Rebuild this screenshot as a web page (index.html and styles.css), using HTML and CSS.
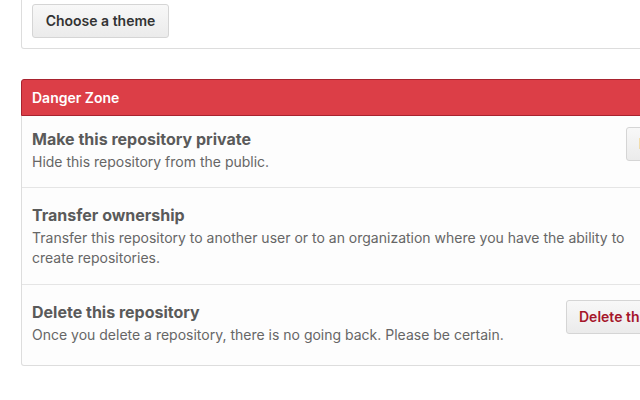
FILE: index.html
```html
<!DOCTYPE html>
<html>
<head>
<meta charset="utf-8">
<link rel="stylesheet" href="styles.css">
</head>
<body>
<div class="page">
  <div class="box-top">
    <button class="btn btn-theme">Choose a theme</button>
  </div>

  <div class="danger">
    <h3 class="danger-head">Danger Zone</h3>
    <div class="danger-body">
      <div class="row row-first">
        <div class="row-text">
          <h4 class="row-title">Make this repository private</h4>
          <p class="row-desc">Hide this repository from the public.</p>
        </div>
        <button class="btn btn-danger btn-private">Make private</button>
      </div>
      <div class="row">
        <div class="row-text">
          <h4 class="row-title">Transfer ownership</h4>
          <p class="row-desc">Transfer this repository to another user or to an organization where you have the ability to create repositories.</p>
        </div>
        <button class="btn btn-danger btn-transfer">Transfer</button>
      </div>
      <div class="row row-last">
        <div class="row-text">
          <h4 class="row-title">Delete this repository</h4>
          <p class="row-desc">Once you delete a repository, there is no going back. Please be certain.</p>
        </div>
        <button class="btn btn-danger btn-delete">Delete this repository</button>
      </div>
    </div>
  </div>
</div>
</body>
</html>
```

FILE: styles.css
```css
html, body {
  margin: 0;
  padding: 0;
  overflow: hidden;
  background: #fff;
}

body {
  font-family: Inter, "Liberation Sans", Arial, sans-serif;
  color: #333;
}

.page {
  padding-left: 21px;
  width: 740px;
}

.box-top {
  border: 1px solid #dddddd;
  border-top: none;
  border-radius: 0 0 3px 3px;
  padding: 4px 10px 10px;
}

.btn {
  box-sizing: border-box;
  height: 34px;
  padding: 0 12px;
  font-family: inherit;
  font-size: 14px;
  font-weight: 600;
  line-height: 32px;
  color: #333;
  background: linear-gradient(#f8f8f8, #ebebeb);
  border: 1px solid #d5d5d5;
  border-radius: 3px;
  white-space: nowrap;
  text-align: left;
  flex-shrink: 0;
}

.btn-theme {
  width: 137px;
  text-align: center;
  display: block;
}

.danger {
  margin-top: 30px;
}

.danger-head {
  margin: 0;
  box-sizing: border-box;
  height: 37px;
  padding: 0 10px;
  line-height: 35px;
  font-size: 14px;
  font-weight: 600;
  color: #fff;
  background: #dc3e47;
  border: 1px solid #a8232f;
  border-radius: 3px 3px 0 0;
}

.danger-body {
  border: 1px solid #dddddd;
  border-top: none;
  border-radius: 0 0 3px 3px;
  background: #fdfdfd;
}

.row {
  display: flex;
  align-items: flex-start;
  padding: 15px 10px 16px;
  border-top: 1px solid #e5e5e5;
}

.row-first {
  border-top: none;
  padding-top: 11px;
  padding-bottom: 15px;
}

.row-last {
  padding-bottom: 20px;
}

.row-text {
  flex: 1;
  min-width: 0;
}

.row-title {
  margin: 0;
  font-size: 16px;
  line-height: 24px;
  font-weight: 700;
  color: #5a5a5a;
}

.row-desc {
  margin: 1px 0 0;
  font-size: 14px;
  line-height: 20px;
  color: #666;
}

.btn-danger {
  color: #a5162a;
  margin-left: 16px;
}

.btn-private {
  width: 124px;
}

.btn-transfer {
  width: 104px;
}

.btn-delete {
  width: 184px;
}
```
